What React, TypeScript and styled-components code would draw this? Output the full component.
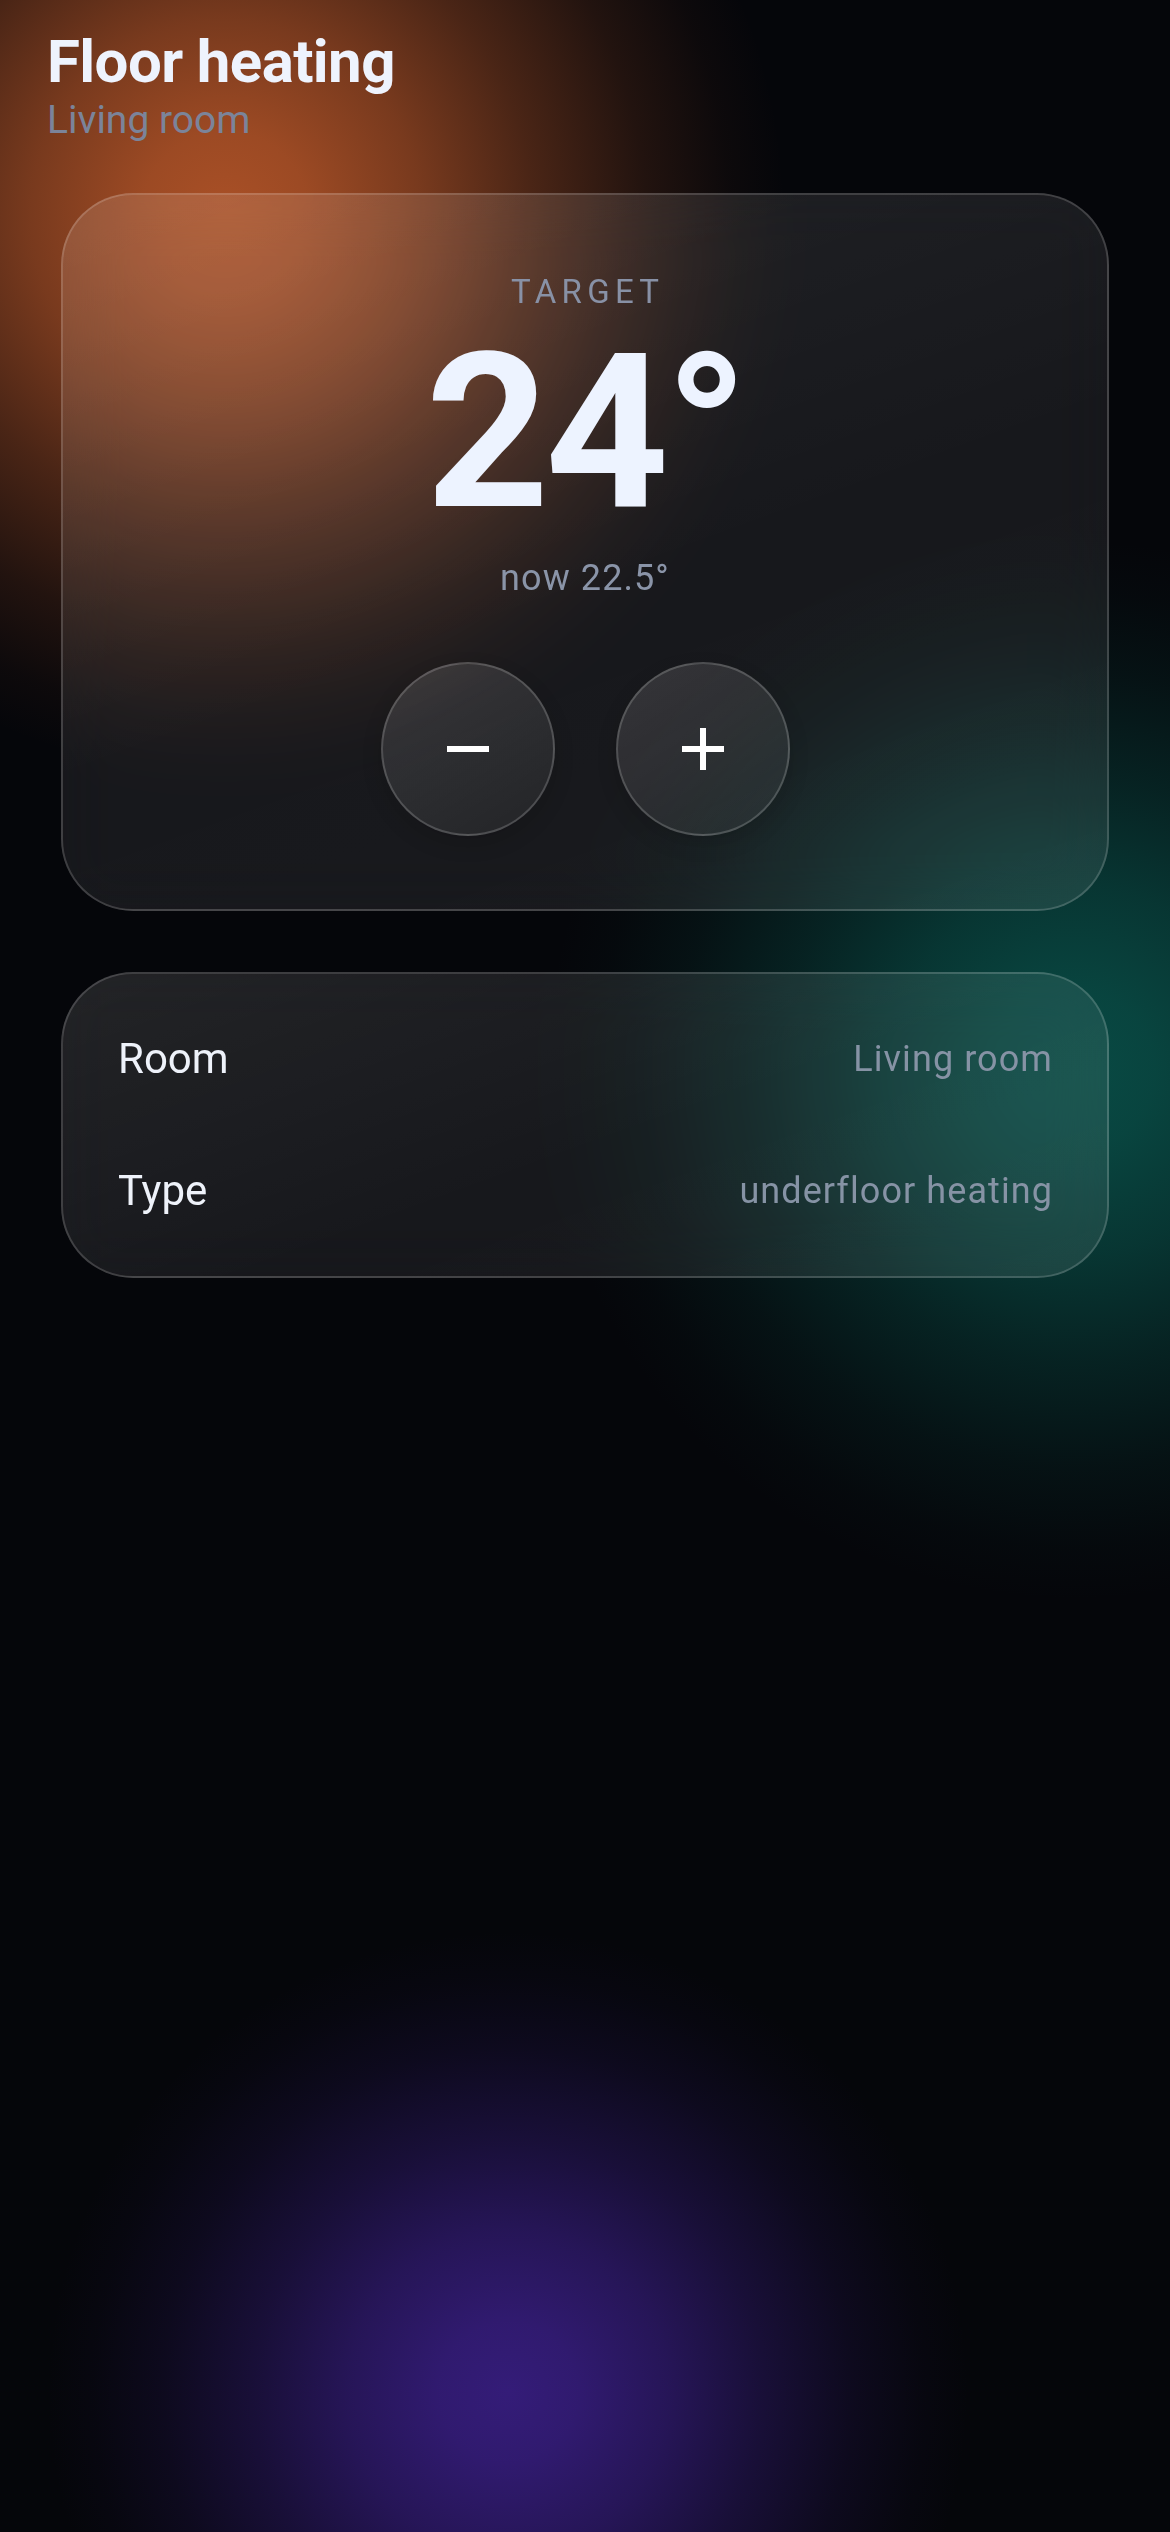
import React from 'react';
import styled, { createGlobalStyle } from 'styled-components';

const GlobalStyle = createGlobalStyle`
    html, body {
        margin: 0;
        padding: 0;
        background: #05060a;
    }
    * {
        box-sizing: border-box;
    }
`;

const Screen = styled.div`
    position: relative;
    width: 1170px;
    min-height: 2532px;
    overflow: hidden;
    background: #05060a;
    font-family: Roboto, "Noto Sans", sans-serif;
    padding-top: 32px;
`;

// soft colour glows behind the glass cards
const Glow = styled.div<{ $x: number; $y: number; $r: number; $rgb: string; $a: number }>`
    position: absolute;
    left: ${ p => p.$x - p.$r }px;
    top: ${ p => p.$y - p.$r }px;
    width: ${ p => p.$r * 2 }px;
    height: ${ p => p.$r * 2 }px;
    border-radius: 50%;
    pointer-events: none;
    background: radial-gradient(
        circle closest-side,
        rgba(${ p => p.$rgb }, ${ p => p.$a }) 0%,
        rgba(${ p => p.$rgb }, ${ p => p.$a * 0.92 }) 15%,
        rgba(${ p => p.$rgb }, ${ p => p.$a * 0.7 }) 35%,
        rgba(${ p => p.$rgb }, ${ p => p.$a * 0.42 }) 55%,
        rgba(${ p => p.$rgb }, ${ p => p.$a * 0.18 }) 75%,
        rgba(${ p => p.$rgb }, ${ p => p.$a * 0.05 }) 90%,
        rgba(${ p => p.$rgb }, 0) 100%
    );
`;

const Content = styled.div`
    position: relative;
    z-index: 1;
`;

const Header = styled.header`
    padding: 0 47px;
`;

const Title = styled.h1`
    margin: 0;
    font-size: 60px;
    line-height: 1;
    font-weight: 700;
    letter-spacing: -0.01em;
    color: #eef3fd;
`;

const Subtitle = styled.div`
    margin-top: 9px;
    font-size: 39px;
    line-height: 1;
    color: #7b849a;
`;

const Glass = styled.section`
    margin: 0 61px;
    border: 2px solid rgba(255, 255, 255, 0.17);
    border-radius: 72px;
    background: linear-gradient(160deg, rgba(255, 255, 255, 0.12), rgba(255, 255, 255, 0.075) 55%, rgba(255, 255, 255, 0.085));
    backdrop-filter: blur(30px);
    -webkit-backdrop-filter: blur(30px);
`;

const Thermostat = styled(Glass)`
    margin-top: 53px;
    padding: 80px 0 73px;
    display: flex;
    flex-direction: column;
    align-items: center;
`;

const Label = styled.div`
    font-size: 33px;
    line-height: 1;
    letter-spacing: 0.16em;
    margin-right: -0.16em;
    color: #8891a6;
`;

const Target = styled.div`
    margin-top: 17px;
    font-size: 216px;
    line-height: 1;
    font-weight: 700;
    letter-spacing: -0.02em;
    color: #edf3ff;
`;

const Now = styled.div`
    margin-top: 19px;
    font-size: 36px;
    line-height: 1;
    letter-spacing: 0.03em;
    color: #8a94a8;
`;

const Controls = styled.div`
    margin-top: 66px;
    display: flex;
    gap: 61px;
`;

const RoundButton = styled.button`
    width: 174px;
    height: 174px;
    border-radius: 50%;
    border: 2px solid rgba(255, 255, 255, 0.18);
    background: linear-gradient(150deg, rgba(255, 255, 255, 0.13), rgba(255, 255, 255, 0.05));
    box-shadow: 0 8px 20px rgba(0, 0, 0, 0.15);
    display: flex;
    align-items: center;
    justify-content: center;
    padding: 0;
    cursor: pointer;
`;

const Details = styled(Glass)`
    margin-top: 61px;
    padding: 19px 54px 19px 55px;
`;

const Row = styled.div`
    height: 132px;
    display: flex;
    align-items: center;
    justify-content: space-between;
`;

const Key = styled.span`
    font-size: 42px;
    line-height: 1;
    color: #eef2fa;
`;

const Value = styled.span`
    font-size: 36px;
    line-height: 1;
    letter-spacing: 0.03em;
    color: #8693a5;
`;

const Sign = ({ plus }: { plus?: boolean }) => (
    <svg width="42" height="42" viewBox="0 0 42 42">
        <line x1="0" y1="21" x2="42" y2="21" stroke="#ffffff" strokeWidth="6" />
        { plus && <line x1="21" y1="0" x2="21" y2="42" stroke="#ffffff" strokeWidth="6" /> }
    </svg>
);

const info = [
    { key: 'Room', value: 'Living room' },
    { key: 'Type', value: 'underfloor heating' },
];

export default function App() {
    const [ target, setTarget ] = React.useState<number>(24);

    return (
        <Screen>
            <GlobalStyle />
            <Glow $x={ 225 } $y={ 215 } $r={ 560 } $rgb="192, 90, 42" $a={ 0.88 } />
            <Glow $x={ 1075 } $y={ 1070 } $r={ 530 } $rgb="10, 100, 90" $a={ 0.72 } />
            <Glow $x={ 508 } $y={ 2392 } $r={ 460 } $rgb="52, 28, 120" $a={ 1 } />
            <Content>
                <Header>
                    <Title>Floor heating</Title>
                    <Subtitle>Living room</Subtitle>
                </Header>
                <Thermostat>
                    <Label>TARGET</Label>
                    <Target>{ target }°</Target>
                    <Now>now 22.5°</Now>
                    <Controls>
                        <RoundButton aria-label="decrease" onClick={ () => setTarget(target - 1) }>
                            <Sign />
                        </RoundButton>
                        <RoundButton aria-label="increase" onClick={ () => setTarget(target + 1) }>
                            <Sign plus />
                        </RoundButton>
                    </Controls>
                </Thermostat>
                <Details>
                    { info.map(item => (
                        <Row key={ item.key }>
                            <Key>{ item.key }</Key>
                            <Value>{ item.value }</Value>
                        </Row>
                    )) }
                </Details>
            </Content>
        </Screen>
    );
};
